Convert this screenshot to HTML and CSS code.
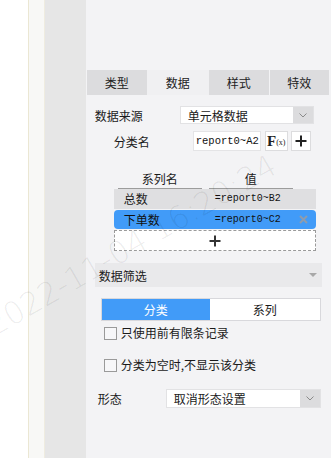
FILE: index.html
```html
<!DOCTYPE html>
<html lang="zh">
<head>
  <meta charset="UTF-8">
  <title>图表属性 - 数据</title>
  <link rel="stylesheet" href="styles.css">
</head>
<body>
  <div class="app">
    <div class="blank"></div>
    <div class="rail"></div>
    <div class="gutter"></div>

    <div class="panel">
      <!-- Tabs -->
      <div class="tabs">
        <div class="tab">类型</div>
        <div class="tab active">数据</div>
        <div class="tab">样式</div>
        <div class="tab">特效</div>
      </div>

      <div class="field source">
        <span class="label">数据来源</span>
        <div class="select">
          <span class="select-text">单元格数据</span>
          <span class="select-arrow">
            <svg width="8" height="5" viewBox="0 0 8 5"><polyline points="0.5,0.5 4,4 7.5,0.5" fill="none" stroke="#8a8a8a" stroke-width="1"/></svg>
          </span>
        </div>
      </div>

      <div class="field category">
        <span class="label">分类名</span>
        <div class="formula">report0~A2</div>
        <button class="btn fx">F<small>(x)</small></button>
        <button class="btn plus">
          <svg width="12" height="12" viewBox="0 0 12 12"><path d="M6 0.5v11M0.5 6h11" stroke="#222" stroke-width="2"/></svg>
        </button>
      </div>

      <!-- Series table -->
      <div class="series">
        <div class="series-head">
          <span class="head-cell">系列名</span>
          <span class="head-cell">值</span>
        </div>
        <div class="series-row">
          <span>总数</span>
          <span class="code">=report0~B2</span>
        </div>
        <div class="series-row selected">
          <span>下单数</span>
          <span class="code">=report0~C2</span>
          <span class="remove">
            <svg width="9" height="9" viewBox="0 0 9 9"><path d="M1 1l7 7M8 1l-7 7" stroke="#8e9cae" stroke-width="2"/></svg>
          </span>
        </div>
        <div class="series-add">
          <svg width="12" height="12" viewBox="0 0 12 12"><path d="M6 0.5v11M0.5 6h11" stroke="#333" stroke-width="2"/></svg>
        </div>
      </div>

      <!-- Filter -->
      <div class="section">
        <span>数据筛选</span>
        <span class="caret"></span>
      </div>

      <div class="segment">
        <span class="seg on">分类</span>
        <span class="seg">系列</span>
      </div>

      <label class="check first"><span class="box"></span>只使用前有限条记录</label>
      <label class="check second"><span class="box"></span>分类为空时,不显示该分类</label>

      <div class="field shape">
        <span class="label">形态</span>
        <div class="select">
          <span class="select-text">取消形态设置</span>
          <span class="select-arrow">
            <svg width="8" height="5" viewBox="0 0 8 5"><polyline points="0.5,0.5 4,4 7.5,0.5" fill="none" stroke="#8a8a8a" stroke-width="1"/></svg>
          </span>
        </div>
      </div>
    </div>
  </div>

  <div class="watermark">2022-11-04 16:20:24</div>
</body>
</html>
```

FILE: styles.css
```css
html, body {
  margin: 0;
  padding: 0;
  width: 331px;
  height: 458px;
  overflow: hidden;
  background: #fff;
  font-family: "Noto Sans CJK SC", "Noto Sans", sans-serif;
  font-size: 12px;
  color: #1a1a1a;
}

.app {
  display: flex;
  height: 458px;
  position: relative;
}

.blank {
  width: 28px;
  background: #fff;
}

.rail {
  width: 15px;
  background: #f8f8f6;
  border-left: 1px solid #ebe7d3;
  border-right: 1px solid #efece0;
}

.gutter {
  width: 41px;
  background: #e6e6e6;
}

.panel {
  width: 246px;
  background: #f3f3f5;
  padding-top: 70px;
  display: flex;
  flex-direction: column;
}

/* Tabs */
.tabs {
  display: grid;
  grid-template-columns: 60px 62px 60px 60px;
  gap: 0 0;
  margin-left: 1px;
  height: 25px;
}

.tab {
  background: #dcdcde;
  line-height: 25px;
  text-align: center;
  color: #222;
}

.tab:nth-child(4) { margin-left: 1px; }

.tab.active {
  background: #f0f0f2;
}

/* Form rows */
.field {
  display: flex;
  align-items: center;
}

.source {
  margin-top: 11px;
  height: 18px;
  padding-left: 9px;
}

.source .label { width: 85px; }
.source .select { width: 134px; height: 18px; }

.category {
  margin-top: 7px;
  height: 20px;
  padding-left: 28px;
}

.category .label { width: 79px; }

.select {
  display: flex;
  background: #fff;
  border: 1px solid #e2e2e4;
  box-sizing: border-box;
}

.select-text {
  flex: 1;
  padding-left: 7px;
  line-height: 17px;
}

.select-arrow {
  width: 20px;
  background: #dcdcde;
  display: flex;
  align-items: center;
  justify-content: center;
}

.formula {
  width: 68px;
  height: 20px;
  box-sizing: border-box;
  background: #fff;
  border: 1px solid #e4e4e6;
  font-family: "Liberation Mono", monospace;
  font-size: 10.5px;
  line-height: 18px;
  padding-left: 2px;
  color: #111;
  white-space: nowrap;
  overflow: hidden;
}

.btn {
  height: 20px;
  box-sizing: border-box;
  background: #fff;
  border: 1px solid #dcdcde;
  padding: 0;
  display: flex;
  align-items: center;
  justify-content: center;
}

.fx {
  width: 23px;
  margin-left: 4px;
  font-family: "Liberation Serif", serif;
  font-size: 15px;
  font-weight: bold;
  color: #222;
  line-height: 1;
}

.fx small {
  font-size: 8px;
  font-weight: normal;
  margin-top: 4px;
}

.plus {
  width: 20px;
  margin-left: 3px;
}

/* Series table */
.series {
  margin-top: 19px;
  margin-left: 28px;
  width: 202px;
}

.series-head {
  display: flex;
  height: 19px;
}

.head-cell {
  width: 84px;
  text-align: center;
  line-height: 18px;
  border-bottom: 1px solid #9c9c9c;
}

.head-cell:first-child { margin-left: 4px; }
.head-cell:last-child { margin-left: 7px; }

.series-row {
  display: grid;
  grid-template-columns: 91px 1fr 24px;
  height: 20px;
  line-height: 20px;
  padding-left: 10px;
  background: #dfdfe1;
}

.series-row.selected {
  height: 19px;
  line-height: 19px;
  margin-top: 1px;
  background: #419bf8;
  border-radius: 4px;
  color: #111;
}

.code {
  font-family: "Liberation Mono", monospace;
  font-size: 10px;
  color: #111;
}

.remove {
  display: flex;
  align-items: center;
  justify-content: center;
}

.series-add {
  margin-top: 1px;
  height: 21px;
  box-sizing: border-box;
  background: #fff;
  border: 1px dashed #9a9a9a;
  display: flex;
  align-items: center;
  justify-content: center;
}

/* Filter section */
.section {
  margin-top: 12px;
  margin-left: 9px;
  width: 227px;
  height: 24px;
  box-sizing: border-box;
  padding: 0 5px 0 4px;
  background: #e9e9eb;
  display: flex;
  align-items: center;
  justify-content: space-between;
}

.caret {
  width: 0;
  height: 0;
  border-left: 4px solid transparent;
  border-right: 4px solid transparent;
  border-top: 4px solid #a8a8a8;
}

.segment {
  margin-top: 11px;
  margin-left: 15px;
  width: 220px;
  height: 23px;
  box-sizing: border-box;
  border: 1px solid #d8d8dc;
  display: flex;
}

.seg {
  flex: 1;
  text-align: center;
  line-height: 21px;
  background: #fff;
}

.seg.on {
  flex: 0 0 108px;
  background: #419bf8;
  color: #fff;
}

.check {
  display: flex;
  align-items: center;
  margin-left: 18px;
  height: 14px;
  line-height: 14px;
}

.check.first { margin-top: 5px; }
.check.second { margin-top: 18px; }

.box {
  width: 13px;
  height: 13px;
  box-sizing: border-box;
  border: 1px solid #9a9a9a;
  background: #f7f7f9;
  margin-right: 4px;
}

.shape {
  margin-top: 17px;
  height: 19px;
  padding-left: 12px;
}

.shape .label { width: 68px; }
.shape .select { width: 155px; height: 19px; }
.shape .select-text { line-height: 18px; }

/* Watermark over everything */
.watermark {
  position: absolute;
  left: 131px;
  top: 245px;
  transform: translate(-50%, -50%) rotate(-30deg);
  font-family: "DejaVu Sans", sans-serif;
  font-weight: 200;
  font-size: 31px;
  white-space: nowrap;
  color: rgba(0, 0, 0, 0.08);
  pointer-events: none;
}
```
